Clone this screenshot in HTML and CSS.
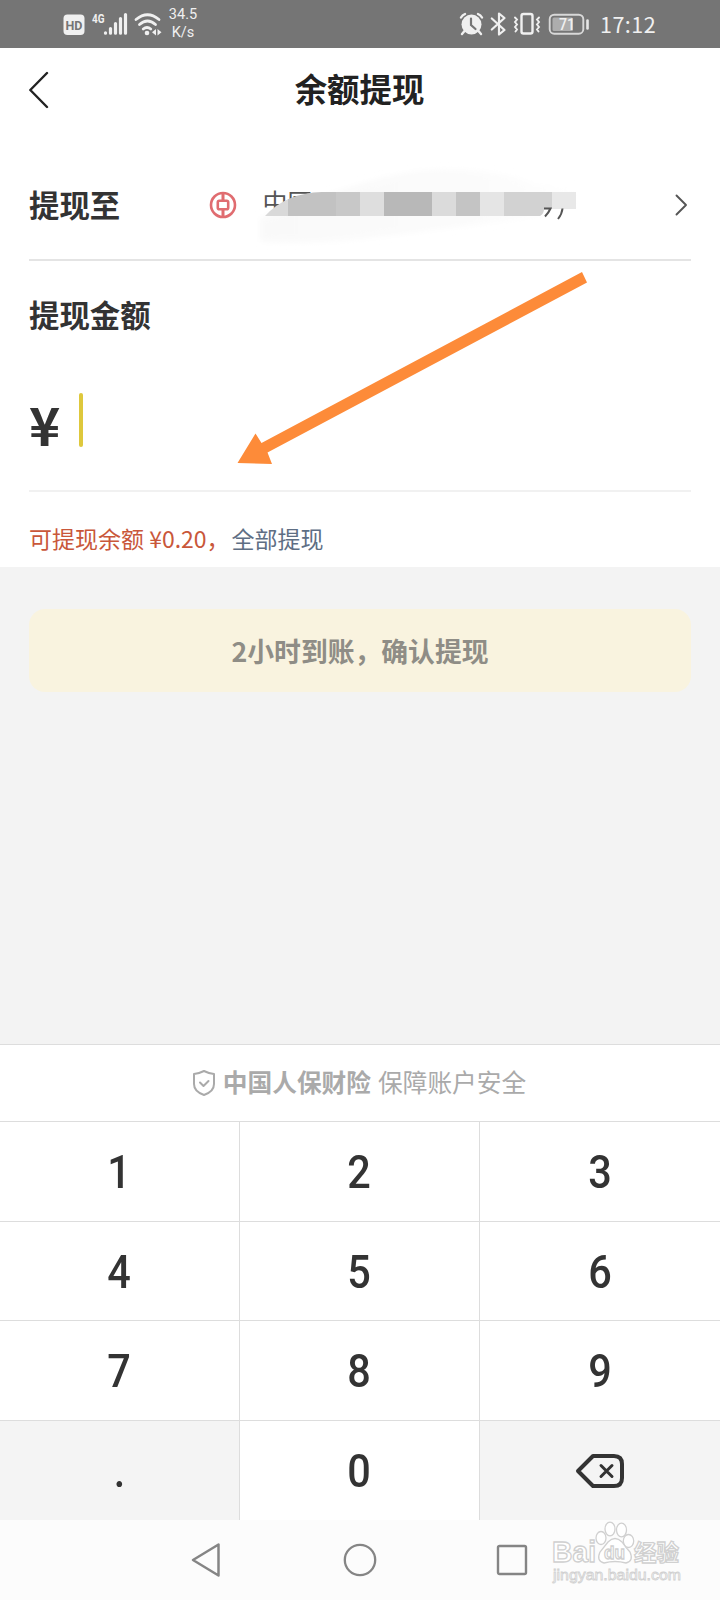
FILE: index.html
```html
<!DOCTYPE html>
<html lang="zh-CN">
<head>
<meta charset="utf-8">
<title>余额提现</title>
<link rel="stylesheet" href="styles.css">
</head>
<body>
<div class="screen">
  <div class="status">
    <svg class="status-left" width="104" height="48" viewBox="60 0 104 48">
      <rect x="63.500" y="14.500" width="21" height="20.500" rx="4" fill="#f0f0f0"/>
      <text x="65.500" y="30" class="hd" textLength="17" lengthAdjust="spacingAndGlyphs">HD</text>
      <text x="92" y="23" class="net" textLength="12.500" lengthAdjust="spacingAndGlyphs">4G</text>
      <g stroke="#f0f0f0" stroke-width="3.200" stroke-linecap="round" fill="none">
        <path d="M105.500 32.800V33.200M110.500 28.500V33.200M115.500 23.500V33.200M120.500 18.500V33.200M125.500 14.500V33.200"/>
        <path d="M136 19.500Q147.500 10 159 19.500M139.500 24.500Q147.500 17.500 155.500 24.500M143.200 29Q147 26 150.800 29" stroke-width="2.800"/>
      </g>
      <circle cx="147" cy="33" r="2.300" fill="#f0f0f0"/>
      <path d="M156 29v6.500l-4-3.250zM157.500 29v6.500l4-3.250z" fill="#f0f0f0"/>
    </svg>
    <div class="speed"><span>34.5</span><span>K/s</span></div>
    <svg class="status-right" width="135" height="48" viewBox="458 0 135 48">
      <circle cx="471.500" cy="24.500" r="10" fill="#f0f0f0"/>
      <path d="M461 17.500q1.500-2.500 4-3.500M478 14q2.500 1 4 3.500M464.500 31l-2.500 3M478.500 31l2.500 3" stroke="#f0f0f0" stroke-width="2.400" stroke-linecap="round" fill="none"/>
      <path d="M471 18.500v6.500l4.500 4" stroke="#757575" stroke-width="2.200" stroke-linecap="round" fill="none"/>
      <path d="M491.800 18.500L504.500 30L499 34.500V13.500L504.500 18L491.800 29.500" stroke="#f0f0f0" stroke-width="2.200" stroke-linejoin="round" stroke-linecap="round" fill="none"/>
      <rect x="521.500" y="14" width="11" height="19.500" rx="2" fill="none" stroke="#f0f0f0" stroke-width="2.400"/>
      <path d="M515 17.500l2 2-2 2.500 2 2.500-2 2.500 2 2.500-1.500 2M539 17.500l-2 2 2 2.500-2 2.500 2 2.500-2 2.500 1.500 2" stroke="#f0f0f0" stroke-width="1.900" fill="none" stroke-linecap="round"/>
      <rect x="549.700" y="14.700" width="33.600" height="19" rx="4.500" fill="none" stroke="#d8d8d8" stroke-width="1.900"/>
      <rect x="552.500" y="17.500" width="20.500" height="13.500" rx="1.500" fill="#adadad"/>
      <path d="M587.500 20.500v8" stroke="#e6e6e6" stroke-width="2.600" stroke-linecap="round"/>
      <text x="559" y="30" class="batt" textLength="16" lengthAdjust="spacingAndGlyphs">71</text>
    </svg>
    <span class="clock">17:12</span>
  </div>

  <main class="card">
    <header class="header">
      <svg class="back" width="24" height="40" viewBox="0 0 24 40"><path d="M18 3L1.300 20L18 37" fill="none" stroke="#222" stroke-width="2.400" stroke-linecap="round" stroke-linejoin="round"/></svg>
      <h1>余额提现</h1>
    </header>
    <section class="account">
      <h2>提现至</h2>
      <svg class="bank" width="28" height="28" viewBox="0 0 28 28" fill="none" stroke="#e06c70"><circle cx="14" cy="14" r="12" stroke-width="2.600"/><rect x="8.800" y="9.800" width="10.400" height="8.400" rx="1.500" stroke-width="2.600"/><path d="M14 2v8M14 18v8" stroke-width="3"/></svg>
      <svg class="masked" width="348" height="90" viewBox="252 160 348 90">
        <defs>
          <linearGradient id="haze" x1="0" x2="1"><stop offset="0" stop-color="#f9f9f9"/><stop offset=".6" stop-color="#fbfbfb"/><stop offset="1" stop-color="#fff"/></linearGradient>
          <filter id="soft" x="-5%" y="-10%" width="110%" height="120%"><feGaussianBlur stdDeviation="3"/></filter>
          <clipPath id="smear"><path d="M265 216Q286 193 322 192H576V209H544Q544 214 540 216z"/></clipPath>
        </defs>
        <path d="M260 218L330 194Q390 173 430 170Q500 168 535 184L596 190V209Q500 222 430 230Q320 246 260 241z" fill="url(#haze)" filter="url(#soft)"/>
        <text x="262.500" y="211.500" class="bank-name">中国</text>
        <path d="M265 216Q290 193 322 192H576V216z" fill="#fff"/>
        <g clip-path="url(#smear)">
          <path fill="#d9d9d9" d="M264 192h24v24h-24z"/><path fill="#c2c2c2" d="M288 192h48v24h-48z"/><path fill="#c8c8c8" d="M336 192h24v24h-24z"/><path fill="#dedede" d="M360 192h24v24h-24z"/><path fill="#b8b8b8" d="M384 192h48v24h-48z"/><path fill="#dbdbdb" d="M432 192h24v24h-24z"/><path fill="#c4c4c4" d="M456 192h24v24h-24z"/><path fill="#e5e5e5" d="M480 192h24v24h-24z"/><path fill="#d2d2d2" d="M504 192h48v24h-48z"/><path fill="#e8e8e8" d="M552 192h24v24h-24z"/>
        </g>
        <path d="M544 208.500h6.500q-2 4.500-5.500 8M562.500 208.500q-.5 5.500-4.500 10.500" fill="none" stroke="#555" stroke-width="2"/>
      </svg>
      <svg class="chevron" width="14" height="24" viewBox="0 0 14 24"><path d="M2.500 2.500L12 12L2.500 21.500" fill="none" stroke="#555" stroke-width="1.900" stroke-linecap="round" stroke-linejoin="round"/></svg>
    </section>
    <h2 class="label">提现金额</h2>
    <div class="amount"><span class="yen">¥</span><span class="cursor"></span></div>
    <p class="note"><span class="available">可提现余额 ¥0.20，</span><a>全部提现</a></p>
    <svg class="arrow" width="356" height="196" viewBox="234 270 356 196"><path d="M237.500 463L255.500 433.500L261.500 443L582 272L587 282.500L267.500 452.500L272 464z" fill="#fd8b39"/></svg>
  </main>

  <section class="action"><button class="confirm">2小时到账，确认提现</button></section>

  <section class="insurance">
    <svg width="24" height="28" viewBox="0 0 24 28" fill="none" stroke="#aaa" stroke-width="2" stroke-linecap="round" stroke-linejoin="round"><path d="M12 2Q17 4.500 22 5V15Q22 22.500 12 26Q2 22.500 2 15V5Q7 4.500 12 2z"/><path d="M8 13.500l3.500 3.500 5-5"/></svg>
    <strong>中国人保财险</strong><span>保障账户安全</span>
  </section>

  <section class="keypad">
    <div class="key"><b>1</b></div><div class="key"><b>2</b></div><div class="key"><b>3</b></div>
    <div class="key"><b>4</b></div><div class="key"><b>5</b></div><div class="key"><b>6</b></div>
    <div class="key"><b>7</b></div><div class="key"><b>8</b></div><div class="key"><b>9</b></div>
    <div class="key gray"><b>.</b></div><div class="key"><b>0</b></div>
    <div class="key gray"><svg width="50" height="36" viewBox="0 0 50 36" fill="none" stroke="#333" stroke-linecap="round" stroke-linejoin="round"><path d="M18 3H39Q47 3 47 11V25Q47 33 39 33H18L3 18z" stroke-width="4"/><path d="M26 12.500l11 11M37 12.500l-11 11" stroke-width="3"/></svg></div>
  </section>

  <nav class="nav">
    <svg width="32" height="36" viewBox="0 0 32 36"><path d="M28.500 2.500V33.500L3 18z" fill="none" stroke="#858585" stroke-width="2.500" stroke-linejoin="round"/></svg>
    <svg width="34" height="34" viewBox="0 0 34 34"><circle cx="17" cy="17" r="15.200" fill="none" stroke="#858585" stroke-width="2.300"/></svg>
    <svg width="32" height="32" viewBox="0 0 32 32"><rect x="2" y="2" width="28" height="28" rx="1.500" fill="none" stroke="#858585" stroke-width="2.400"/></svg>
  </nav>
  <svg class="watermark" width="140" height="72" viewBox="548 1518 140 72">
    <g fill="#fff" stroke="#d0d0d0" stroke-width="1.300">
      <text x="552" y="1562" class="wm-brand" textLength="44" lengthAdjust="spacingAndGlyphs">Bai</text>
      <ellipse cx="610" cy="1529" rx="5" ry="6.800"/><ellipse cx="621.500" cy="1530" rx="5" ry="6.800"/>
      <ellipse cx="601" cy="1538" rx="5" ry="6.500"/><ellipse cx="628.500" cy="1541" rx="5.200" ry="6.500"/>
      <path d="M608 1542Q615 1535 622 1542Q626 1548 630 1552Q634 1561 626 1563Q615 1560 604 1563Q596 1561 600 1552Q604 1547 608 1542z"/>
      <text x="604" y="1559" class="wm-du" textLength="21" lengthAdjust="spacingAndGlyphs">du</text>
      <text x="634" y="1561" class="wm-cn" textLength="45" lengthAdjust="spacingAndGlyphs">经验</text>
      <text x="553" y="1579.500" class="wm-url" textLength="128" lengthAdjust="spacingAndGlyphs">jingyan.baidu.com</text>
    </g>
  </svg>
</div>
</body>
</html>
```
FILE: styles.css
```css
* { box-sizing: border-box; }
body { margin: 0; background: #fff; }
h1, h2, p { margin: 0; }
svg { display: block; flex: none; }
.screen {
  position: relative;
  width: 720px;
  height: 1600px;
  overflow: hidden;
  display: flex;
  flex-direction: column;
  background: #f3f3f3;
  color: #333;
  font-family: "Noto Sans CJK SC", sans-serif;
}
.status {
  height: 48px;
  flex: none;
  display: flex;
  align-items: center;
  padding-left: 60px;
  background: #757575;
  color: #f0f0f0;
}
.hd { font: bold 13px Roboto, sans-serif; fill: #757575; }
.net { font: bold 13px Roboto, sans-serif; fill: #f0f0f0; }
.batt { font: 500 16px Roboto, sans-serif; fill: #f0f0f0; }
.speed {
  width: 40px;
  display: flex;
  flex-direction: column;
  align-items: center;
  font: 14.500px/18px Roboto, sans-serif;
  padding-right: 2px;
}
.status-right { margin-left: 254px; }
.clock { margin-left: 7px; font-size: 21.500px; line-height: 46px; letter-spacing: .5px; padding-bottom: 1px; }
.card { position: relative; height: 519px; flex: none; padding: 0 29px; background: #fff; }
.header { height: 84px; display: flex; align-items: center; }
.header h1 { flex: 1; text-align: center; margin-right: 25px; padding-bottom: 4px; font-size: 32.400px; line-height: 48px; color: #222; }
.account { height: 129px; padding-top: 19px; display: flex; align-items: center; border-bottom: 2px solid #e4e4e4; }
h2 { font-size: 30.400px; line-height: 44px; }
.account h2 { width: 180px; padding-bottom: 2px; }
.masked { margin-left: 15px; }
.bank-name { font-size: 25px; fill: #555; }
.chevron { margin-left: auto; margin-right: 3px; }
.label { height: 110px; line-height: 107px; }
.amount { height: 121px; display: flex; align-items: center; padding-bottom: 21px; border-bottom: 2px solid #f1f1f1; }
.yen { width: 50px; font: bold 53px/60px "Noto Sans CJK SC", sans-serif; padding-top: 6px; }
.cursor { width: 4px; height: 54px; border-radius: 2px; background: #dec83c; }
.note { height: 75px; padding-top: 19px; font-size: 23px; line-height: 54px; white-space: nowrap; color: #c9573a; }
.note a { color: #5e6e84; margin-left: 2px; }
.arrow { position: absolute; left: 234px; top: 222px; }
.action { height: 477px; flex: none; padding: 42px 29px 0; }
.confirm {
  display: block;
  width: 662px;
  height: 83px;
  padding: 0;
  border: 0;
  border-radius: 16px;
  background: #f9f3df;
  color: #8f8d86;
  font: bold 26.800px/40px "Noto Sans CJK SC", sans-serif;
}
.insurance {
  height: 77px;
  flex: none;
  display: flex;
  align-items: center;
  justify-content: center;
  gap: 7px;
  padding: 0 2px 0 0;
  border-top: 1px solid #ddd;
  background: #fff;
  color: #aaa;
  font-size: 24.700px;
}
.insurance strong, .insurance span { padding-bottom: 4px; }
.keypad { height: 399px; flex: none; display: grid; grid-template-columns: 240px 240px 240px; grid-template-rows: 100px 99px 100px 100px; }
.key {
  display: flex;
  align-items: center;
  justify-content: center;
  border-top: 1px solid #ddd;
  border-right: 1px solid #ddd;
  background: #fff;
}
.key:nth-child(3n) { border-right: 0; }
.key.gray { background: #f4f4f4; }
.key b { font: 500 46px/60px Roboto, sans-serif; transform: scaleX(.9); padding-top: 1px; }
.nav { height: 80px; flex: none; display: flex; align-items: center; padding-left: 190px; background: #fcfcfc; }
.nav svg + svg { margin-left: 121px; }
.nav svg:last-child { margin-left: 119px; }
.watermark { position: absolute; left: 548px; top: 1518px; }
.wm-brand { font: bold 29px "Liberation Sans", sans-serif; }
.wm-du { font: bold 19px "Liberation Sans", sans-serif; }
.wm-cn { font: bold 23px "Noto Sans CJK SC", sans-serif; }
.wm-url { font: 15px "Liberation Sans", sans-serif; stroke-width: .8; }
```
